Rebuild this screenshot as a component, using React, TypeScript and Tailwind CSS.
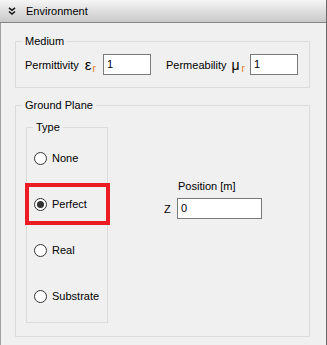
import React from "react";

const font = { fontFamily: '"Liberation Sans", Arial, sans-serif' };

const Radio = ({ label, checked }: { label: string; checked?: boolean }) => (
  <div className="flex items-center h-[46px] pl-[7px]">
    <span className="w-[13px] h-[13px] rounded-full border border-[#333333] bg-white flex items-center justify-center">
      {checked && <span className="w-[7px] h-[7px] rounded-full bg-[#333333]" />}
    </span>
    <span className="ml-[5px] text-[11px] leading-[16px] text-black">{label}</span>
  </div>
);

const Field = ({ value, width }: { value: string; width: string }) => (
  <div
    className={`${width} h-[21px] border border-[#7a7a7a] bg-white pl-[3px] text-[11px] leading-[19px] text-black`}
  >
    {value}
  </div>
);

export default function App() {
  return (
    <div
      className="w-[327px] h-[345px] bg-[#f0f0f0] border-r border-[#6a6a6a] flex flex-col text-black"
      style={font}
    >
      <div className="h-[23px] shrink-0 flex items-center bg-gradient-to-b from-[#f6f6f6] to-[#c9c9c9] border-b border-[#858585]">
        <svg width="8" height="8" viewBox="0 0 8 8" className="ml-[8px]" fill="none" stroke="#111" strokeWidth="1.5">
          <path d="M1 0.8 L4 3.3 L7 0.8" />
          <path d="M1 4.5 L4 7 L7 4.5" />
        </svg>
        <span className="ml-[10px] text-[11px] leading-[16px]">Environment</span>
      </div>

      <div className="flex-1 border-l border-[#a0a0a0]">
        <fieldset className="mt-[10px] ml-[14px] w-[295px] border border-[#dcdcdc]">
          <legend className="ml-[6px] px-[3px] text-[11px] leading-[16px]">Medium</legend>
          <div className="flex items-center pl-[9px] pt-[5px] pb-[12px]">
            <div className="w-[78px] flex items-center text-[11px] leading-[16px]">
              <span>Permittivity</span>
              <span className="ml-[6px] text-[15px] leading-[16px]">ε</span>
              <span className="mt-[9px] ml-[1px] text-[10px] leading-[10px] text-[#e07b1a]">r</span>
            </div>
            <Field value="1" width="w-[48px]" />
            <div className="ml-[15px] w-[84px] flex items-center text-[11px] leading-[16px]">
              <span>Permeability</span>
              <span className="ml-[5px] text-[14px] leading-[16px]">μ</span>
              <span className="mt-[9px] ml-[2px] text-[10px] leading-[10px] text-[#e07b1a]">r</span>
            </div>
            <Field value="1" width="w-[48px]" />
          </div>
        </fieldset>

        <fieldset className="mt-[9px] ml-[14px] w-[295px] border border-[#dcdcdc]">
          <legend className="ml-[6px] px-[3px] text-[11px] leading-[16px]">Ground Plane</legend>
          <div className="flex pb-[13px]">
            <fieldset className="mt-[6px] ml-[10px] w-[82px] border border-[#dcdcdc] pb-[3px]">
              <legend className="ml-[6px] px-[3px] text-[11px] leading-[16px]">Type</legend>
              <Radio label="None" />
              <div className="relative">
                <Radio label="Perfect" checked />
                <div className="absolute left-[-2px] top-[2px] w-[85px] h-[42px] border-[4px] border-[#ed1c24]" />
              </div>
              <Radio label="Real" />
              <Radio label="Substrate" />
            </fieldset>
            <div className="ml-[56px] mt-[65px] flex flex-col">
              <span className="ml-[14px] text-[11px] leading-[16px]">Position [m]</span>
              <div className="mt-[4px] flex items-center">
                <span className="w-[13px] text-[11px] leading-[16px]">Z</span>
                <Field value="0" width="w-[85px]" />
              </div>
            </div>
          </div>
        </fieldset>
      </div>
    </div>
  );
}
